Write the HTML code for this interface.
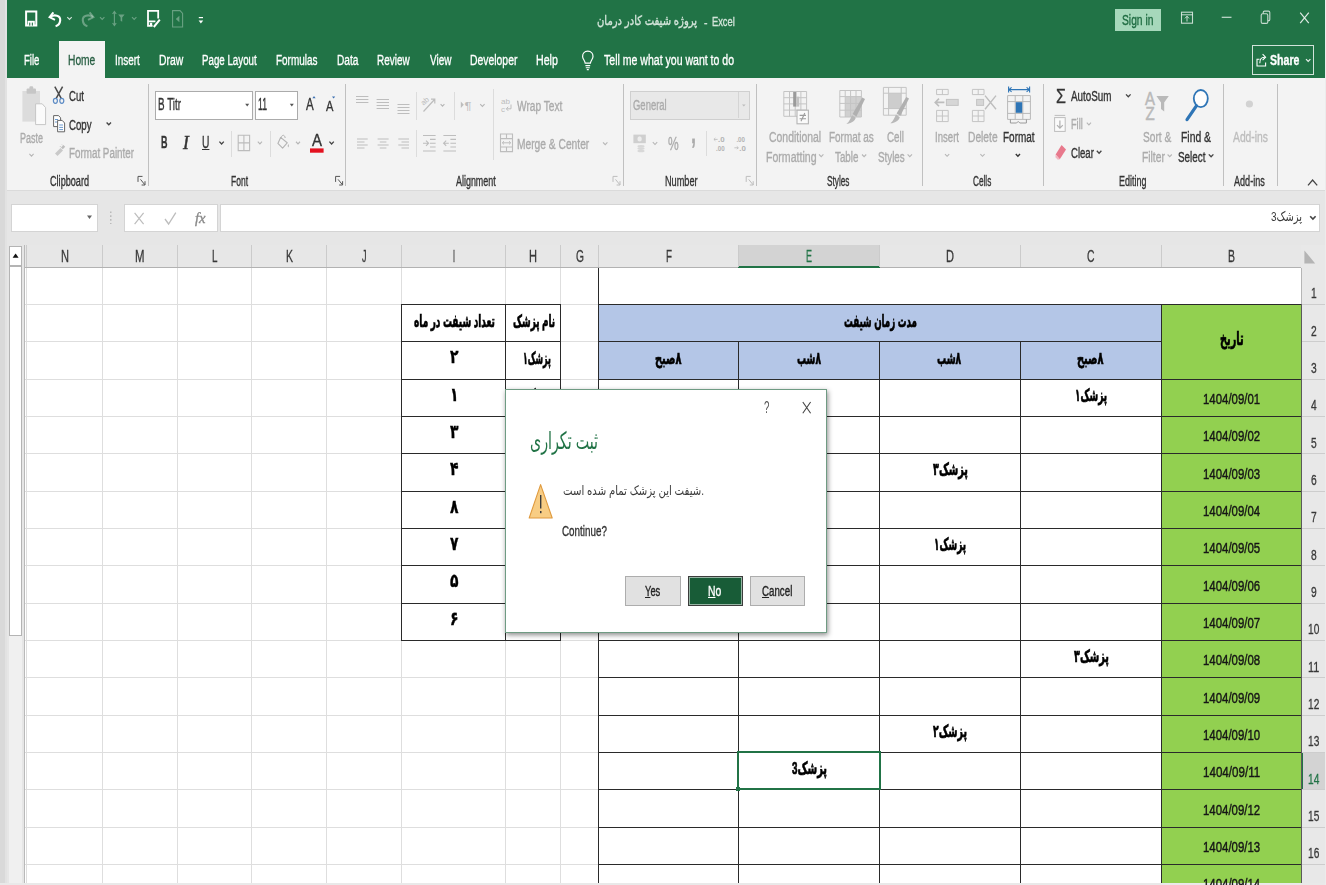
<!DOCTYPE html><html lang="fa"><head><meta charset="utf-8"><title>Excel</title><style>
html,body{margin:0;padding:0}
body{width:1326px;height:885px;position:relative;overflow:hidden;background:#e6e6e6;font-family:"Liberation Sans","DejaVu Sans",sans-serif}
.r{position:absolute}
.t{position:absolute;white-space:nowrap;line-height:1;transform-origin:0 0;display:block;-webkit-text-stroke:.35px currentColor}
.fa{font-family:"Liberation Sans","DejaVu Sans",sans-serif}
.sf{font-family:"Liberation Serif","DejaVu Serif",serif}
.b{font-weight:bold}
.hv{-webkit-text-stroke:.7px #000}
.i{font-style:italic}
.u{text-decoration:underline}
svg.ov{position:absolute;left:0;top:0}
.tl{position:absolute;left:0;top:0;width:1326px;height:885px;will-change:transform}
#dlg{position:absolute;left:505px;top:389px;width:322px;height:244px;background:#fff;border:1px solid #6f9b83;box-sizing:border-box;box-shadow:1px 2px 5px rgba(0,0,0,.45)}
.btn{position:absolute;box-sizing:border-box;border:1px solid #adadad;background:#e1e1e1}
</style></head><body>
<div class="r" style="left:0px;top:0px;width:1326px;height:885px;background:#e6e6e6;"></div>
<div class="r" style="left:7px;top:0px;width:1318px;height:78px;background:#217346;"></div>
<div class="r" style="left:0px;top:0px;width:7px;height:885px;background:#e2e2e2;"></div>
<div class="r" style="left:0px;top:0px;width:5px;height:885px;background:#d9d9d9;"></div>
<div class="r" style="left:59px;top:41px;width:46px;height:37px;background:#f3f3f3;"></div>
<div class="r" style="left:7px;top:78px;width:1318px;height:112px;background:#f3f3f3;"></div>
<div class="r" style="left:7px;top:190px;width:1318px;height:1px;background:#dadada;"></div>
<div class="r" style="left:1115px;top:9px;width:46px;height:22px;background:#a6d8bb;"></div>
<div class="r" style="left:1252px;top:45px;width:62px;height:30px;background:transparent;border:1px solid rgba(255,255,255,.8);box-sizing:border-box;"></div>
<div class="r" style="left:148px;top:84px;width:1px;height:102px;background:#c0c0c0;"></div>
<div class="r" style="left:345px;top:84px;width:1px;height:102px;background:#c0c0c0;"></div>
<div class="r" style="left:623px;top:84px;width:1px;height:102px;background:#c0c0c0;"></div>
<div class="r" style="left:756px;top:84px;width:1px;height:102px;background:#c0c0c0;"></div>
<div class="r" style="left:922px;top:84px;width:1px;height:102px;background:#c0c0c0;"></div>
<div class="r" style="left:1043px;top:84px;width:1px;height:102px;background:#c0c0c0;"></div>
<div class="r" style="left:1223px;top:84px;width:1px;height:102px;background:#c0c0c0;"></div>
<div class="r" style="left:1277px;top:84px;width:1px;height:102px;background:#c0c0c0;"></div>
<div class="r" style="left:231px;top:131px;width:1px;height:26px;background:#dcdcdc;"></div>
<div class="r" style="left:270px;top:131px;width:1px;height:26px;background:#dcdcdc;"></div>
<div class="r" style="left:416px;top:92px;width:1px;height:28px;background:#dcdcdc;"></div>
<div class="r" style="left:454px;top:92px;width:1px;height:28px;background:#dcdcdc;"></div>
<div class="r" style="left:416px;top:130px;width:1px;height:27px;background:#dcdcdc;"></div>
<div class="r" style="left:493px;top:89px;width:1px;height:71px;background:#dcdcdc;"></div>
<div class="r" style="left:706px;top:131px;width:1px;height:25px;background:#dcdcdc;"></div>
<div class="r" style="left:155px;top:91px;width:98px;height:29px;background:#fff;border:1px solid #ababab;box-sizing:border-box;"></div>
<div class="r" style="left:255px;top:91px;width:43px;height:29px;background:#fff;border:1px solid #ababab;box-sizing:border-box;"></div>
<div class="r" style="left:630px;top:91px;width:120px;height:29px;background:#e8e8e8;border:1px solid #cfcfcf;box-sizing:border-box;"></div>
<div class="r" style="left:738px;top:92px;width:1px;height:26px;background:#d4d4d4;"></div>
<div class="r" style="left:11px;top:204px;width:87px;height:28px;background:#fff;border:1px solid #d4d4d4;box-sizing:border-box;"></div>
<div class="r" style="left:124px;top:204px;width:94px;height:28px;background:#fff;border:1px solid #d4d4d4;box-sizing:border-box;"></div>
<div class="r" style="left:220px;top:204px;width:1100px;height:28px;background:#fff;border:1px solid #d4d4d4;box-sizing:border-box;"></div>
<div class="r" style="left:25px;top:268px;width:1276px;height:617px;background:#fff;"></div>
<div class="r" style="left:25px;top:245px;width:1301px;height:23px;background:#e7e7e7;"></div>
<div class="r" style="left:25px;top:267px;width:1276px;height:1px;background:#b2b2b2;"></div>
<div class="r" style="left:1301px;top:245px;width:25px;height:640px;background:#e8e8e8;"></div>
<div class="r" style="left:1301px;top:268px;width:1px;height:617px;background:#b5b5b5;"></div>
<div class="r" style="left:24px;top:245px;width:1px;height:640px;background:#b9b9b9;"></div>
<div class="r" style="left:738px;top:245px;width:142px;height:23px;background:#d3d3d3;"></div>
<div class="r" style="left:738px;top:266px;width:142px;height:2px;background:#217346;"></div>
<div class="r" style="left:1302px;top:752px;width:24px;height:37px;background:#d3d3d3;"></div>
<div class="r" style="left:1301px;top:752px;width:2px;height:37px;background:#217346;"></div>
<div class="r" style="left:26px;top:245px;width:1px;height:22px;background:#cbcbcb;"></div>
<div class="r" style="left:102px;top:245px;width:1px;height:22px;background:#cbcbcb;"></div>
<div class="r" style="left:177px;top:245px;width:1px;height:22px;background:#cbcbcb;"></div>
<div class="r" style="left:251px;top:245px;width:1px;height:22px;background:#cbcbcb;"></div>
<div class="r" style="left:326px;top:245px;width:1px;height:22px;background:#cbcbcb;"></div>
<div class="r" style="left:401px;top:245px;width:1px;height:22px;background:#cbcbcb;"></div>
<div class="r" style="left:505px;top:245px;width:1px;height:22px;background:#cbcbcb;"></div>
<div class="r" style="left:560px;top:245px;width:1px;height:22px;background:#cbcbcb;"></div>
<div class="r" style="left:598px;top:245px;width:1px;height:22px;background:#cbcbcb;"></div>
<div class="r" style="left:738px;top:245px;width:1px;height:22px;background:#cbcbcb;"></div>
<div class="r" style="left:879px;top:245px;width:1px;height:22px;background:#cbcbcb;"></div>
<div class="r" style="left:1020px;top:245px;width:1px;height:22px;background:#cbcbcb;"></div>
<div class="r" style="left:1161px;top:245px;width:1px;height:22px;background:#cbcbcb;"></div>
<div class="r" style="left:25px;top:304px;width:1276px;height:1px;background:#dedede;"></div>
<div class="r" style="left:1302px;top:304px;width:24px;height:1px;background:#cdcdcd;"></div>
<div class="r" style="left:25px;top:341px;width:1276px;height:1px;background:#dedede;"></div>
<div class="r" style="left:1302px;top:341px;width:24px;height:1px;background:#cdcdcd;"></div>
<div class="r" style="left:25px;top:379px;width:1276px;height:1px;background:#dedede;"></div>
<div class="r" style="left:1302px;top:379px;width:24px;height:1px;background:#cdcdcd;"></div>
<div class="r" style="left:25px;top:416px;width:1276px;height:1px;background:#dedede;"></div>
<div class="r" style="left:1302px;top:416px;width:24px;height:1px;background:#cdcdcd;"></div>
<div class="r" style="left:25px;top:453px;width:1276px;height:1px;background:#dedede;"></div>
<div class="r" style="left:1302px;top:453px;width:24px;height:1px;background:#cdcdcd;"></div>
<div class="r" style="left:25px;top:491px;width:1276px;height:1px;background:#dedede;"></div>
<div class="r" style="left:1302px;top:491px;width:24px;height:1px;background:#cdcdcd;"></div>
<div class="r" style="left:25px;top:528px;width:1276px;height:1px;background:#dedede;"></div>
<div class="r" style="left:1302px;top:528px;width:24px;height:1px;background:#cdcdcd;"></div>
<div class="r" style="left:25px;top:565px;width:1276px;height:1px;background:#dedede;"></div>
<div class="r" style="left:1302px;top:565px;width:24px;height:1px;background:#cdcdcd;"></div>
<div class="r" style="left:25px;top:603px;width:1276px;height:1px;background:#dedede;"></div>
<div class="r" style="left:1302px;top:603px;width:24px;height:1px;background:#cdcdcd;"></div>
<div class="r" style="left:25px;top:640px;width:1276px;height:1px;background:#dedede;"></div>
<div class="r" style="left:1302px;top:640px;width:24px;height:1px;background:#cdcdcd;"></div>
<div class="r" style="left:25px;top:677px;width:1276px;height:1px;background:#dedede;"></div>
<div class="r" style="left:1302px;top:677px;width:24px;height:1px;background:#cdcdcd;"></div>
<div class="r" style="left:25px;top:715px;width:1276px;height:1px;background:#dedede;"></div>
<div class="r" style="left:1302px;top:715px;width:24px;height:1px;background:#cdcdcd;"></div>
<div class="r" style="left:25px;top:752px;width:1276px;height:1px;background:#dedede;"></div>
<div class="r" style="left:1302px;top:752px;width:24px;height:1px;background:#cdcdcd;"></div>
<div class="r" style="left:25px;top:789px;width:1276px;height:1px;background:#dedede;"></div>
<div class="r" style="left:1302px;top:789px;width:24px;height:1px;background:#cdcdcd;"></div>
<div class="r" style="left:25px;top:827px;width:1276px;height:1px;background:#dedede;"></div>
<div class="r" style="left:1302px;top:827px;width:24px;height:1px;background:#cdcdcd;"></div>
<div class="r" style="left:25px;top:864px;width:1276px;height:1px;background:#dedede;"></div>
<div class="r" style="left:1302px;top:864px;width:24px;height:1px;background:#cdcdcd;"></div>
<div class="r" style="left:26px;top:268px;width:1px;height:617px;background:#dedede;"></div>
<div class="r" style="left:102px;top:268px;width:1px;height:617px;background:#dedede;"></div>
<div class="r" style="left:177px;top:268px;width:1px;height:617px;background:#dedede;"></div>
<div class="r" style="left:251px;top:268px;width:1px;height:617px;background:#dedede;"></div>
<div class="r" style="left:326px;top:268px;width:1px;height:617px;background:#dedede;"></div>
<div class="r" style="left:401px;top:268px;width:1px;height:617px;background:#dedede;"></div>
<div class="r" style="left:505px;top:268px;width:1px;height:617px;background:#dedede;"></div>
<div class="r" style="left:560px;top:268px;width:1px;height:617px;background:#dedede;"></div>
<div class="r" style="left:598px;top:304px;width:1px;height:581px;background:#dedede;"></div>
<div class="r" style="left:738px;top:304px;width:1px;height:581px;background:#dedede;"></div>
<div class="r" style="left:879px;top:304px;width:1px;height:581px;background:#dedede;"></div>
<div class="r" style="left:1020px;top:304px;width:1px;height:581px;background:#dedede;"></div>
<div class="r" style="left:1161px;top:304px;width:1px;height:581px;background:#dedede;"></div>
<div class="r" style="left:9px;top:246px;width:13px;height:20px;background:#fff;border:1px solid #b4b4b4;box-sizing:border-box;"></div>
<div class="r" style="left:9px;top:266px;width:13px;height:370px;background:#fff;border:1px solid #b4b4b4;box-sizing:border-box;"></div>
<div class="r" style="left:9px;top:636px;width:13px;height:249px;background:#f0f0f0;"></div>
<div class="r" style="left:598px;top:304px;width:563px;height:75px;background:#b4c6e7;"></div>
<div class="r" style="left:1161px;top:304px;width:140px;height:581px;background:#92d050;"></div>
<div class="r" style="left:598px;top:304px;width:703px;height:1px;background:#2a2a2a;"></div>
<div class="r" style="left:598px;top:341px;width:563px;height:1px;background:#2a2a2a;"></div>
<div class="r" style="left:598px;top:379px;width:703px;height:1px;background:#2a2a2a;"></div>
<div class="r" style="left:598px;top:416px;width:703px;height:1px;background:#2a2a2a;"></div>
<div class="r" style="left:598px;top:453px;width:703px;height:1px;background:#2a2a2a;"></div>
<div class="r" style="left:598px;top:491px;width:703px;height:1px;background:#2a2a2a;"></div>
<div class="r" style="left:598px;top:528px;width:703px;height:1px;background:#2a2a2a;"></div>
<div class="r" style="left:598px;top:565px;width:703px;height:1px;background:#2a2a2a;"></div>
<div class="r" style="left:598px;top:603px;width:703px;height:1px;background:#2a2a2a;"></div>
<div class="r" style="left:598px;top:640px;width:703px;height:1px;background:#2a2a2a;"></div>
<div class="r" style="left:598px;top:677px;width:703px;height:1px;background:#2a2a2a;"></div>
<div class="r" style="left:598px;top:715px;width:703px;height:1px;background:#2a2a2a;"></div>
<div class="r" style="left:598px;top:752px;width:703px;height:1px;background:#2a2a2a;"></div>
<div class="r" style="left:598px;top:789px;width:703px;height:1px;background:#2a2a2a;"></div>
<div class="r" style="left:598px;top:827px;width:703px;height:1px;background:#2a2a2a;"></div>
<div class="r" style="left:598px;top:864px;width:703px;height:1px;background:#2a2a2a;"></div>
<div class="r" style="left:598px;top:268px;width:1px;height:617px;background:#2a2a2a;"></div>
<div class="r" style="left:1161px;top:304px;width:1px;height:581px;background:#2a2a2a;"></div>
<div class="r" style="left:1301px;top:304px;width:1px;height:581px;background:#5a5a5a;"></div>
<div class="r" style="left:738px;top:341px;width:1px;height:544px;background:#2a2a2a;"></div>
<div class="r" style="left:879px;top:341px;width:1px;height:544px;background:#2a2a2a;"></div>
<div class="r" style="left:1020px;top:341px;width:1px;height:544px;background:#2a2a2a;"></div>
<div class="r" style="left:401px;top:304px;width:160px;height:1px;background:#2a2a2a;"></div>
<div class="r" style="left:401px;top:341px;width:160px;height:1px;background:#2a2a2a;"></div>
<div class="r" style="left:401px;top:379px;width:160px;height:1px;background:#2a2a2a;"></div>
<div class="r" style="left:401px;top:416px;width:160px;height:1px;background:#2a2a2a;"></div>
<div class="r" style="left:401px;top:453px;width:160px;height:1px;background:#2a2a2a;"></div>
<div class="r" style="left:401px;top:491px;width:160px;height:1px;background:#2a2a2a;"></div>
<div class="r" style="left:401px;top:528px;width:160px;height:1px;background:#2a2a2a;"></div>
<div class="r" style="left:401px;top:565px;width:160px;height:1px;background:#2a2a2a;"></div>
<div class="r" style="left:401px;top:603px;width:160px;height:1px;background:#2a2a2a;"></div>
<div class="r" style="left:401px;top:640px;width:160px;height:1px;background:#2a2a2a;"></div>
<div class="r" style="left:401px;top:304px;width:1px;height:337px;background:#2a2a2a;"></div>
<div class="r" style="left:505px;top:304px;width:1px;height:337px;background:#2a2a2a;"></div>
<div class="r" style="left:560px;top:304px;width:1px;height:337px;background:#2a2a2a;"></div>
<div class="r" style="left:737px;top:751px;width:144px;height:39px;background:transparent;border:2px solid #217346;box-sizing:border-box;"></div>
<div class="r" style="left:736px;top:787px;width:4px;height:4px;background:#217346;"></div>
<div class="r" style="left:0px;top:883px;width:1326px;height:2px;background:#e9e9e9;"></div>
<div class="r" style="left:1325px;top:0px;width:1px;height:885px;background:#ececec;"></div>
<svg class="ov" width="1326" height="885" viewBox="0 0 1326 885"><path d="M26.1 11.5H36.3V25.6H26.1Z" fill="none" stroke="#fff" stroke-width="2"/><rect x="27.6" y="20.8" width="7.2" height="4.8" fill="#fff"/><rect x="29.2" y="22.6" width="1.1" height="3" fill="#217346"/><rect x="31.8" y="22.6" width="1.1" height="3" fill="#217346"/>
<path d="M53.4 12.4L49.6 17.2L55 19.8" fill="none" stroke="#fff" stroke-width="2" stroke-linejoin="miter"/><path d="M50 17C54.5 14 60.6 15.4 60.2 20.4C59.9 23.6 57.8 25.6 55.6 26.2" fill="none" stroke="#fff" stroke-width="2.1"/>
<path d="M67.3 17.04 L69.50 19.36 L71.7 17.04" fill="none" stroke="rgba(255,255,255,.8)" stroke-width="1.1"/>
<path d="M89.6 12.4L93.4 17.2L88 19.8" fill="none" stroke="rgba(255,255,255,.33)" stroke-width="2"/><path d="M93 17C88.5 14 82.4 15.4 82.8 20.4C83.1 23.6 85.2 25.6 87.4 26.2" fill="none" stroke="rgba(255,255,255,.33)" stroke-width="2.1"/>
<path d="M100 17.04 L102.20 19.36 L104.4 17.04" fill="none" stroke="rgba(255,255,255,.33)" stroke-width="1.1"/>
<path d="M114.4 11.5v14M112.6 14l1.8-2.6l1.8 2.6M112.6 23l1.8 2.6l1.8-2.6" fill="none" stroke="rgba(255,255,255,.33)" stroke-width="1.1"/><path d="M118.2 14.6h6.4l-2.4 3v4.2l-1.6-1v-3.2z" fill="rgba(255,255,255,.33)"/>
<path d="M132 17.04 L134.20 19.36 L136.4 17.04" fill="none" stroke="rgba(255,255,255,.33)" stroke-width="1.1"/>
<path d="M158.2 18.6V10.8H148V25.8H152.6M148 21.4H155.4" fill="none" stroke="#fff" stroke-width="1.8"/><path d="M153.8 27L159.8 19.6" stroke="#fff" stroke-width="2"/><rect x="149.8" y="22.8" width="2.4" height="2.4" fill="#fff"/>
<path d="M172.6 10.6H180l2.6 2.8V27H172.6Z" fill="none" stroke="rgba(255,255,255,.33)" stroke-width="1.1"/><path d="M179.4 15.8v6.4l-3.6-3.2z" fill="rgba(255,255,255,.33)"/>
<path d="M198.8 17.6h4.2" stroke="#fff" stroke-width="1.2"/><path d="M198.6 20.6h4.6l-2.3 2.9z" fill="#fff"/>
<rect x="1181.5" y="12.2" width="11" height="11" fill="none" stroke="rgba(255,255,255,.75)" stroke-width="1.1"/><path d="M1181.5 14.8h11" stroke="rgba(255,255,255,.75)" stroke-width="1"/><path d="M1187 21.5v-5M1185 18.4l2-2.2l2 2.2" fill="none" stroke="rgba(255,255,255,.75)" stroke-width="1"/>
<path d="M1221.7 17.3h9.8" stroke="rgba(255,255,255,.75)" stroke-width="1.2"/>
<rect x="1261.2" y="13.8" width="6.6" height="9.6" rx="1.5" fill="none" stroke="rgba(255,255,255,.75)" stroke-width="1.1"/><path d="M1263.2 13.6v-1.2q0-1.3 1.3-1.3h4q1.3 0 1.3 1.3v7q0 1.3-1.3 1.3h-.6" fill="none" stroke="rgba(255,255,255,.75)" stroke-width="1.1"/>
<path d="M1300.2 12.6L1308.8 23.2M1308.8 12.6L1300.2 23.2" stroke="rgba(255,255,255,.85)" stroke-width="1.2"/>
<path d="M587.8 51.2C591.4 51.2 593 54 593 56.4C593 59.2 590.6 60.6 590.4 63.2H585.2C585 60.6 582.6 59.2 582.6 56.4C582.6 54 584.2 51.2 587.8 51.2Z" fill="none" stroke="#fff" stroke-width="1.2"/><path d="M585.4 65.6h4.8M585.8 67.8h4M586.8 69.6h2" stroke="#fff" stroke-width="1.1"/>
<path d="M1259.5 59.2H1257V66H1265.6V62.5" fill="none" stroke="#fff" stroke-width="1.1"/><path d="M1259.8 63.2C1259.8 59.4 1261.5 57.2 1264.4 57.2M1262.6 54.2L1265.6 57.2L1262.6 60.2" fill="none" stroke="#fff" stroke-width="1.1"/>
<path d="M1306 59.14 L1308.20 61.46 L1310.4 59.14" fill="none" stroke="rgba(255,255,255,.9)" stroke-width="1.2"/>
<rect x="22.4" y="91" width="17.6" height="30.6" fill="#dcdcdc"/><rect x="26.6" y="88.6" width="9.4" height="5.2" rx="1" fill="#c6c6c6"/><rect x="29.4" y="86.2" width="3.8" height="3.4" rx="1.2" fill="#c6c6c6"/><path d="M35.6 103.8H42.2L45.6 107.6V124.6H35.6Z" fill="#fbfbfb" stroke="#c6c6c6" stroke-width="1"/>
<path d="M29.4 153.90 L31.50 156.10 L33.6 153.90" fill="none" stroke="#b6b6b6" stroke-width="1.1"/>
<path d="M54.8 86.6L61.2 98.4M62.6 86.6L56.2 98.4" stroke="#4a4a4a" stroke-width="1.5" fill="none"/><ellipse cx="55.4" cy="100.8" rx="2" ry="2.5" fill="none" stroke="#5b8ac4" stroke-width="1.2"/><ellipse cx="61.8" cy="100.8" rx="2" ry="2.5" fill="none" stroke="#5b8ac4" stroke-width="1.2"/>
<path d="M53.6 115.6H58.6L60.6 117.8V126.6H53.6Z" fill="#fff" stroke="#666" stroke-width="1"/><path d="M57.6 120.4H62.2L64.6 123V131.8H57.6Z" fill="#fff" stroke="#666" stroke-width="1"/><path d="M55 119.5h3M55 122h2M59.2 125h3.8M59.2 127.4h3.8M59.2 129.6h3.8" stroke="#5b8fc9" stroke-width=".9"/>
<path d="M106.6 122.44 L108.80 124.75 L111 122.44" fill="none" stroke="#444" stroke-width="1.3"/>
<path d="M55 153.5L60.5 148L63 150.5L57.5 156Z" fill="#c9c9c9"/><path d="M61 147.5L63.5 145L65.2 146.8L62.8 149.3Z" fill="#bdbdbd"/><path d="M60 146.2l1.2 1.2M62 144.6l.8.8" stroke="#c4c4c4" stroke-width="1"/>
<path d="M138 181.9 V176.4 H142.5" fill="none" stroke="#555" stroke-width="1"/><path d="M140.5 179.4 L144.8 184.70000000000002 M145 181.20000000000002 V185.0 H141.6" fill="none" stroke="#555" stroke-width="1"/>
<path d="M245.2 103.8h4l-2 2.6z" fill="#555"/><path d="M289.8 103.8h4l-2 2.6z" fill="#555"/>
<path d="M312.4 98.2h3.2l-1.6-2.2z" fill="#3b6fb0"/><path d="M332 96.4h3.2l-1.6 2.2z" fill="#3b6fb0"/>
<path d="M219.4 141.65 L221.60 143.96 L223.8 141.65" fill="none" stroke="#444" stroke-width="1.3"/>
<path d="M238.2 135.2H249.6V150.6H238.2ZM243.9 135.2V150.6M238.2 142.9H249.6" fill="none" stroke="#bcbcbc" stroke-width="1.1"/>
<path d="M257.8 141.70 L259.90 143.90 L262 141.70" fill="none" stroke="#b6b6b6" stroke-width="1.1"/>
<path d="M280.6 137.4L287.2 142.8L282.6 148.2L277.9 143.4Z" fill="none" stroke="#b4b4b4" stroke-width="1.1" stroke-linejoin="round"/><path d="M281.4 139C280.6 135 284.6 133.6 285.2 138" fill="none" stroke="#b4b4b4" stroke-width="1"/><path d="M288.3 143.8q1.3 2.6 0 3.6q-1.3-1 0-3.6z" fill="#b4b4b4"/>
<path d="M296 141.75 L298.00 143.85 L300 141.75" fill="none" stroke="#b6b6b6" stroke-width="1.1"/>
<rect x="310" y="148.4" width="13.6" height="4.3" fill="#e3111f"/>
<path d="M329.4 141.65 L331.60 143.96 L333.8 141.65" fill="none" stroke="#444" stroke-width="1.3"/>
<path d="M335.6 181.9 V176.4 H340.1" fill="none" stroke="#555" stroke-width="1"/><path d="M338.1 179.4 L342.40000000000003 184.70000000000002 M342.6 181.20000000000002 V185.0 H339.20000000000005" fill="none" stroke="#555" stroke-width="1"/>
<path d="M356.0 96.5H368.4 M356.0 99.5H368.4 M356.0 102.5H368.4" stroke="#bdbdbd" stroke-width="1.1" fill="none"/>
<path d="M376.6 99.5H389.0 M376.6 102.5H389.0 M376.6 105.5H389.0 M376.6 108.5H389.0" stroke="#bdbdbd" stroke-width="1.1" fill="none"/>
<path d="M397.5 104.5H409.5 M397.5 107.5H409.5 M397.5 110.5H409.5 M397.5 113.5H409.5" stroke="#bdbdbd" stroke-width="1.1" fill="none"/>
<path d="M357.0 139H367.7 M357.0 142H364.5 M357.0 145H367.7 M357.0 148H364.5" stroke="#bdbdbd" stroke-width="1.1" fill="none"/>
<path d="M377.6 139H388.6 M379.8 142H386.4 M377.6 145H388.6 M379.8 148H386.4" stroke="#bdbdbd" stroke-width="1.1" fill="none"/>
<path d="M398.3 139H409.0 M401.5 142H409.0 M398.3 145H409.0 M401.5 148H409.0" stroke="#bdbdbd" stroke-width="1.1" fill="none"/>
<path d="M423.5 111.5L434.5 99.5M434.8 103.6V99.2H431" fill="none" stroke="#bdbdbd" stroke-width="1.2"/><text x="422" y="104" font-size="7.5" font-family="Liberation Sans, sans-serif" fill="#bdbdbd" transform="rotate(-42 425 103)">ab</text>
<path d="M440.6 104.20 L442.50 106.20 L444.4 104.20" fill="none" stroke="#b6b6b6" stroke-width="1.1"/>
<path d="M460.8 101.6v6.4l3-3.2z" fill="#bdbdbd"/><text x="464.6" y="110" font-size="11" font-family="Liberation Sans, sans-serif" fill="#bdbdbd" textLength="7" lengthAdjust="spacingAndGlyphs">¶</text>
<path d="M480.2 104.04 L482.40 106.36 L484.6 104.04" fill="none" stroke="#b6b6b6" stroke-width="1.1"/>
<path d="M423.0 135.5H435.6 M423.0 151H435.6" stroke="#bdbdbd" stroke-width="1.1" fill="none"/>
<path d="M430.0 139.4H435.6 M430.0 143.2H435.6 M430.0 147H435.6" stroke="#bdbdbd" stroke-width="1.1" fill="none"/>
<path d="M423 143.2h5.2M426 140.6l2.6 2.6l-2.6 2.6" fill="none" stroke="#bdbdbd" stroke-width="1.1"/>
<path d="M443.4 135.5H456.0 M443.4 151H456.0" stroke="#bdbdbd" stroke-width="1.1" fill="none"/>
<path d="M450.4 139.4H456.0 M450.4 143.2H456.0 M450.4 147H456.0" stroke="#bdbdbd" stroke-width="1.1" fill="none"/>
<path d="M443.6 143.2h5.2M446.2 140.6l-2.6 2.6l2.6 2.6" fill="none" stroke="#bdbdbd" stroke-width="1.1"/>
<text x="501" y="104.2" font-size="8" font-family="Liberation Sans, sans-serif" fill="#bdbdbd" textLength="9" lengthAdjust="spacingAndGlyphs">ab</text><text x="501" y="111.8" font-size="8" font-family="Liberation Sans, sans-serif" fill="#bdbdbd">c</text><path d="M511 104.5v4.3h-4.4M508.2 106.8l-1.9 2l1.9 2" fill="none" stroke="#bdbdbd" stroke-width="1"/>
<path d="M500.5 134H512.5V151.6H500.5ZM500.5 138.6H512.5M500.5 147H512.5M506.5 134V138.6M506.5 147V151.6" fill="none" stroke="#bdbdbd" stroke-width="1.1"/><path d="M502.4 142.8h8.2M504 141.2l-1.7 1.6l1.7 1.6M509 141.2l1.7 1.6l-1.7 1.6" fill="none" stroke="#bdbdbd" stroke-width="1"/>
<path d="M603 142.44 L605.20 144.75 L607.4 142.44" fill="none" stroke="#b6b6b6" stroke-width="1.1"/>
<path d="M613 181.9 V176.4 H617.5" fill="none" stroke="#bdbdbd" stroke-width="1"/><path d="M615.5 179.4 L619.8 184.70000000000002 M620 181.20000000000002 V185.0 H616.6" fill="none" stroke="#bdbdbd" stroke-width="1"/>
<path d="M742 104.4h3.6l-1.8 2.2z" fill="#bcbcbc"/>
<rect x="633.4" y="134.6" width="12.4" height="8.6" fill="#cfcfcf"/><ellipse cx="639.6" cy="138.9" rx="2.2" ry="2.6" fill="#ededed"/><ellipse cx="641" cy="146.2" rx="3.6" ry="1.3" fill="#d8d8d8"/><ellipse cx="641" cy="148.6" rx="3.6" ry="1.3" fill="#d8d8d8"/><ellipse cx="641" cy="151" rx="3.6" ry="1.3" fill="#d8d8d8"/>
<path d="M652.8 142.24 L655.00 144.56 L657.2 142.24" fill="none" stroke="#b6b6b6" stroke-width="1.1"/>
<text x="718" y="142.2" font-size="7.5" font-weight="bold" font-family="Liberation Sans, sans-serif" fill="#b4b4b4" textLength="6.6" lengthAdjust="spacingAndGlyphs">.0</text><text x="716" y="150.6" font-size="7.5" font-weight="bold" font-family="Liberation Sans, sans-serif" fill="#b4b4b4" textLength="8.6" lengthAdjust="spacingAndGlyphs">.00</text><path d="M714 139.4h3.6M715.4 138l-1.5 1.4l1.5 1.4" fill="none" stroke="#bdbdbd" stroke-width=".9"/>
<text x="736.4" y="142.2" font-size="7.5" font-weight="bold" font-family="Liberation Sans, sans-serif" fill="#b4b4b4" textLength="8.6" lengthAdjust="spacingAndGlyphs">.00</text><text x="739.2" y="150.6" font-size="7.5" font-weight="bold" font-family="Liberation Sans, sans-serif" fill="#b4b4b4" textLength="6.6" lengthAdjust="spacingAndGlyphs">.0</text><path d="M734.4 147.8h3.8M736.8 146.4l1.5 1.4l-1.5 1.4" fill="none" stroke="#bdbdbd" stroke-width=".9"/>
<path d="M746.2 181.9 V176.4 H750.7" fill="none" stroke="#bdbdbd" stroke-width="1"/><path d="M748.7 179.4 L753.0 184.70000000000002 M753.2 181.20000000000002 V185.0 H749.8000000000001" fill="none" stroke="#bdbdbd" stroke-width="1"/>
<path d="M783.8 91.5H806.6V116.3H783.8ZM789.5 91.5V116.3M795.2 91.5V116.3M800.9 91.5V116.3M783.8 97.7H806.6M783.8 103.9H806.6M783.8 110.1H806.6" fill="none" stroke="#c4c4c4" stroke-width="1"/><rect x="793.2" y="92" width="3.2" height="14.6" fill="#9a9a9a"/><rect x="796.4" y="96.6" width="2.8" height="10" fill="#c2c2c2"/><rect x="797" y="110.2" width="11.4" height="13.6" fill="#fafafa" stroke="#b4b4b4" stroke-width="1.1"/><path d="M799.6 115.4h6.4M799.6 118.8h6.4M804.8 113l-3.8 8.2" stroke="#9c9c9c" stroke-width="1.1" fill="none"/>
<rect x="845.2" y="96.6" width="16.2" height="20.4" fill="#d0d0d0"/><path d="M839.8 90.5H861.4V117H839.8ZM845.2 90.5V117M850.6 90.5V117M856 90.5V117M839.8 96.6H861.4M839.8 103.4H861.4M839.8 110.2H861.4" fill="none" stroke="#c4c4c4" stroke-width="1"/><path d="M865 99L856.4 116.4L852.6 114L862.2 97.6Z" fill="#b0b0b0"/><path d="M852 115.2L855.8 117.8C854.8 121.4 850 124 846.4 123.8C849.4 122 850.4 118.4 852 115.2Z" fill="#b8b8b8"/>
<rect x="888.6" y="93.2" width="12.6" height="15.4" fill="#cdcdcd"/><path d="M883.4 87.4H906.2V115.2H883.4ZM888.6 87.4V115.2M901.2 87.4V115.2M883.4 93.2H906.2M883.4 108.6H906.2" fill="none" stroke="#c4c4c4" stroke-width="1"/><path d="M909 98.4L900.4 115.8L896.6 113.4L906.2 97Z" fill="#b0b0b0"/><path d="M896 114.6L899.8 117.2C898.8 120.8 894 123.4 890.4 123.2C893.4 121.4 894.4 117.8 896 114.6Z" fill="#b8b8b8"/>
<path d="M819 154.44 L821.20 156.75 L823.4 154.44" fill="none" stroke="#b6b6b6" stroke-width="1.1"/>
<path d="M862 154.50 L864.10 156.70 L866.2 154.50" fill="none" stroke="#b6b6b6" stroke-width="1.1"/>
<path d="M907.6 154.44 L909.80 156.75 L912 154.44" fill="none" stroke="#b6b6b6" stroke-width="1.1"/>
<path d="M936.6 89.4H948.2V94.6H936.6ZM942.4 89.4V94.6M936.6 110.4H948.2V121.6H936.6ZM942.4 110.4V121.6M936.6 116H948.2" fill="none" stroke="#c4c4c4" stroke-width="1"/><rect x="946.4" y="99.4" width="11.8" height="6" fill="#d6d6d6" stroke="#c4c4c4" stroke-width="1"/><path d="M935.4 102.4h9M939 98.6l-3.8 3.8l3.8 3.8" fill="none" stroke="#bdbdbd" stroke-width="1.6"/>
<path d="M972.4 89.4H984V94.6H972.4ZM978.2 89.4V94.6M972.4 110.4H984V121.6H972.4ZM978.2 110.4V121.6M972.4 116H984" fill="none" stroke="#c4c4c4" stroke-width="1"/><rect x="976.6" y="99.4" width="7" height="6" fill="#d6d6d6" stroke="#c4c4c4" stroke-width="1"/><path d="M985 95.6L996 109.2M996 95.6L985 109.2" stroke="#bdbdbd" stroke-width="1.4"/>
<path d="M1008.6 89.6H1029.6M1008.6 86.6V92.6M1029.6 86.6V92.6" stroke="#2e75b6" stroke-width="1.1" fill="none"/><path d="M1011.6 87.4l-2.6 2.2l2.6 2.2M1026.6 87.4l2.6 2.2l-2.6 2.2" stroke="#2e75b6" stroke-width="1.1" fill="none"/><path d="M1007.6 95.6H1030.4V119.4H1007.6ZM1015.2 95.6V119.4M1022.8 95.6V119.4M1007.6 101.6H1030.4M1007.6 113.4H1030.4" fill="none" stroke="#b9b9b9" stroke-width="1"/><rect x="1015.8" y="102.2" width="6.4" height="10.6" fill="#2e75b6"/><path d="M1010.4 119.4v3.6h6.2l1.6-1.6l1.6 1.6h6.6v-3.6" fill="none" stroke="#9a9a9a" stroke-width="1"/>
<path d="M945 154.10 L947.10 156.30 L949.2 154.10" fill="none" stroke="#b6b6b6" stroke-width="1.1"/>
<path d="M980.4 154.10 L982.50 156.30 L984.6 154.10" fill="none" stroke="#b6b6b6" stroke-width="1.1"/>
<path d="M1015.8 154.10 L1017.90 156.30 L1020 154.10" fill="none" stroke="#333" stroke-width="1.4"/>
<path d="M1126 94.39 L1128.30 96.81 L1130.6 94.39" fill="none" stroke="#444" stroke-width="1.3"/>
<rect x="1054.6" y="117.6" width="10.6" height="13.8" fill="#fafafa" stroke="#bdbdbd" stroke-width="1"/><path d="M1054.6 115.4h10.6" stroke="#bdbdbd" stroke-width="1"/><path d="M1059.9 120.4v7.6M1057 125.2l2.9 3l2.9-3" fill="none" stroke="#b0b0b0" stroke-width="1.2"/>
<path d="M1086.8 122.70 L1088.90 124.90 L1091 122.70" fill="none" stroke="#b6b6b6" stroke-width="1.1"/>
<path d="M1061.6 145L1066 149.6L1059.8 159.2L1055.6 154.6Z" fill="#e8798c"/><path d="M1055.6 154.6L1059.8 159.2L1057.8 159.8L1055.4 157.2Z" fill="#f2b6c0"/>
<path d="M1096.8 150.79 L1099.10 153.21 L1101.4 150.79" fill="none" stroke="#444" stroke-width="1.3"/>
<text x="1145" y="104.6" font-size="18" font-family="Liberation Sans, sans-serif" fill="#b9b9b9" stroke="#b9b9b9" stroke-width=".5" textLength="10" lengthAdjust="spacingAndGlyphs">A</text><text x="1145.4" y="120" font-size="18" font-family="Liberation Sans, sans-serif" fill="#b9b9b9" stroke="#b9b9b9" stroke-width=".5" textLength="9.2" lengthAdjust="spacingAndGlyphs">Z</text><path d="M1156.4 96h12.4l-4.6 6.4v9l-3.2-2.4v-6.6z" fill="#b9b9b9"/>
<path d="M1167.6 154.50 L1169.70 156.70 L1171.8 154.50" fill="none" stroke="#b6b6b6" stroke-width="1.1"/>
<ellipse cx="1200.8" cy="98.6" rx="7" ry="8.6" fill="#fdfdfd" stroke="#2e75b6" stroke-width="1.8"/><path d="M1196.4 105.8L1187 119.6" stroke="#2e75b6" stroke-width="3.2" stroke-linecap="round"/>
<path d="M1208.8 154.39 L1211.10 156.81 L1213.4 154.39" fill="none" stroke="#444" stroke-width="1.3"/>
<circle cx="1249.4" cy="104" r="3.6" fill="#d2d2d2"/>
<path d="M1308 185.4L1312.6 180L1317.2 185.4" fill="none" stroke="#444" stroke-width="1.3"/>
<path d="M87 215.6h5l-2.5 3.4z" fill="#666"/>
<path d="M110.8 211.5v1.6M110.8 215.3v1.6M110.8 219.1v1.6M110.8 222.9v1" stroke="#b0b0b0" stroke-width="1.2"/>
<path d="M134.6 212.8L143.6 224.2M143.6 212.8L134.6 224.2" stroke="#bdbdbd" stroke-width="1.2"/>
<path d="M165 219L168.6 224L175.8 212.6" fill="none" stroke="#bdbdbd" stroke-width="1.3"/>
<path d="M1310.2 216.18 L1312.90 219.02 L1315.6 216.18" fill="none" stroke="#444" stroke-width="1.6"/>
<path d="M1304.4 250.4V263.4H1315.2Z" fill="#b4b4b4"/>
<path d="M12.6 257.8h6l-3-4.4z" fill="#111"/></svg>
<div class="tl">
<span class="t fa" dir="rtl" style="left:597.0px;top:14.0px;font-size:13px;color:#d3e5da;transform:scaleX(0.770);">پروژه شیفت کادر درمان</span>
<span class="t" style="left:703.5px;top:15.5px;font-size:13px;color:#d3e5da;transform:scaleX(0.806);">-</span>
<span class="t" style="left:712.0px;top:14.9px;font-size:13.5px;color:#d3e5da;transform:scaleX(0.688);">Excel</span>
<span class="t" style="left:1122.0px;top:12.8px;font-size:14.5px;color:#1e6b41;transform:scaleX(0.708);">Sign in</span>
<span class="t" style="left:24.4px;top:52.0px;font-size:15.5px;color:#fff;transform:scaleX(0.616);">File</span>
<span class="t" style="left:67.7px;top:52.0px;font-size:15.5px;color:#2a6045;transform:scaleX(0.660);">Home</span>
<span class="t" style="left:114.5px;top:52.0px;font-size:15.5px;color:#fff;transform:scaleX(0.642);">Insert</span>
<span class="t" style="left:158.8px;top:52.0px;font-size:15.5px;color:#fff;transform:scaleX(0.669);">Draw</span>
<span class="t" style="left:201.6px;top:52.0px;font-size:15.5px;color:#fff;transform:scaleX(0.628);">Page Layout</span>
<span class="t" style="left:275.8px;top:52.0px;font-size:15.5px;color:#fff;transform:scaleX(0.642);">Formulas</span>
<span class="t" style="left:336.6px;top:52.0px;font-size:15.5px;color:#fff;transform:scaleX(0.653);">Data</span>
<span class="t" style="left:377.0px;top:52.0px;font-size:15.5px;color:#fff;transform:scaleX(0.641);">Review</span>
<span class="t" style="left:429.5px;top:52.0px;font-size:15.5px;color:#fff;transform:scaleX(0.645);">View</span>
<span class="t" style="left:470.0px;top:52.0px;font-size:15.5px;color:#fff;transform:scaleX(0.671);">Developer</span>
<span class="t" style="left:536.3px;top:52.0px;font-size:15.5px;color:#fff;transform:scaleX(0.687);">Help</span>
<span class="t" style="left:603.7px;top:52.0px;font-size:15.5px;color:#fff;transform:scaleX(0.680);">Tell me what you want to do</span>
<span class="t b" style="left:1270.4px;top:52.4px;font-size:15px;color:#fff;transform:scaleX(0.705);">Share</span>
<span class="t" style="left:20.0px;top:130.7px;font-size:14px;color:#ababab;transform:scaleX(0.642);">Paste</span>
<span class="t" style="left:68.8px;top:89.0px;font-size:14px;color:#333;transform:scaleX(0.684);">Cut</span>
<span class="t" style="left:69.0px;top:117.7px;font-size:14px;color:#333;transform:scaleX(0.691);">Copy</span>
<span class="t" style="left:69.0px;top:145.6px;font-size:14px;color:#ababab;transform:scaleX(0.702);">Format Painter</span>
<span class="t" style="left:50.0px;top:173.7px;font-size:14px;color:#333;transform:scaleX(0.651);">Clipboard</span>
<span class="t" style="left:158.0px;top:97.3px;font-size:16px;color:#333;transform:scaleX(0.616);">B Titr</span>
<span class="t" style="left:258.0px;top:97.3px;font-size:16px;color:#333;transform:scaleX(0.542);">11</span>
<span class="t b" style="left:160.5px;top:134.3px;font-size:17px;color:#333;transform:scaleX(0.529);">B</span>
<span class="t sf i" style="left:182.8px;top:133.8px;font-size:18px;color:#333;-webkit-text-stroke:0.5px currentColor;transform:scaleX(0.967);">I</span>
<span class="t u" style="left:201.6px;top:134.3px;font-size:17px;color:#333;transform:scaleX(0.603);">U</span>
<span class="t" style="left:231.0px;top:173.7px;font-size:14px;color:#333;transform:scaleX(0.607);">Font</span>
<span class="t" style="left:305.5px;top:96.3px;font-size:17px;color:#333;transform:scaleX(0.679);">A</span>
<span class="t" style="left:325.6px;top:98.3px;font-size:15px;color:#333;transform:scaleX(0.739);">A</span>
<span class="t" style="left:311.5px;top:132.0px;font-size:17px;color:#333;transform:scaleX(0.882);">A</span>
<span class="t" style="left:516.5px;top:99.0px;font-size:14px;color:#ababab;transform:scaleX(0.725);">Wrap Text</span>
<span class="t" style="left:516.5px;top:137.2px;font-size:14px;color:#ababab;transform:scaleX(0.731);">Merge & Center</span>
<span class="t" style="left:456.3px;top:173.7px;font-size:14px;color:#333;transform:scaleX(0.638);">Alignment</span>
<span class="t" style="left:633.0px;top:98.4px;font-size:14px;color:#ababab;transform:scaleX(0.677);">General</span>
<span class="t" style="left:667.7px;top:134.0px;font-size:19px;color:#ababab;transform:scaleX(0.633);">%</span>
<span class="t b" style="left:691.3px;top:119.5px;font-size:28px;color:#ababab;transform:scaleX(0.643);">,</span>
<span class="t" style="left:665.0px;top:173.7px;font-size:14px;color:#333;transform:scaleX(0.655);">Number</span>
<span class="t" style="left:768.8px;top:130.2px;font-size:14px;color:#ababab;transform:scaleX(0.745);">Conditional</span>
<span class="t" style="left:765.5px;top:149.6px;font-size:14px;color:#ababab;transform:scaleX(0.755);">Formatting</span>
<span class="t" style="left:829.0px;top:130.2px;font-size:14px;color:#ababab;transform:scaleX(0.711);">Format as</span>
<span class="t" style="left:835.0px;top:149.6px;font-size:14px;color:#ababab;transform:scaleX(0.699);">Table</span>
<span class="t" style="left:886.8px;top:130.2px;font-size:14px;color:#ababab;transform:scaleX(0.701);">Cell</span>
<span class="t" style="left:877.5px;top:149.6px;font-size:14px;color:#ababab;transform:scaleX(0.700);">Styles</span>
<span class="t" style="left:827.0px;top:173.7px;font-size:14px;color:#333;transform:scaleX(0.588);">Styles</span>
<span class="t" style="left:935.0px;top:130.2px;font-size:14px;color:#ababab;transform:scaleX(0.685);">Insert</span>
<span class="t" style="left:968.0px;top:130.2px;font-size:14px;color:#ababab;transform:scaleX(0.731);">Delete</span>
<span class="t" style="left:1002.8px;top:130.2px;font-size:14px;color:#333;transform:scaleX(0.713);">Format</span>
<span class="t" style="left:972.7px;top:173.7px;font-size:14px;color:#333;transform:scaleX(0.588);">Cells</span>
<span class="t" style="left:1070.5px;top:89.0px;font-size:14px;color:#333;transform:scaleX(0.703);">AutoSum</span>
<span class="t" style="left:1070.5px;top:117.3px;font-size:14px;color:#ababab;transform:scaleX(0.654);">Fill</span>
<span class="t" style="left:1070.5px;top:145.6px;font-size:14px;color:#333;transform:scaleX(0.684);">Clear</span>
<span class="t" style="left:1142.7px;top:130.2px;font-size:14px;color:#ababab;transform:scaleX(0.727);">Sort &</span>
<span class="t" style="left:1141.5px;top:149.6px;font-size:14px;color:#ababab;transform:scaleX(0.736);">Filter</span>
<span class="t" style="left:1181.0px;top:130.2px;font-size:14px;color:#333;transform:scaleX(0.741);">Find &</span>
<span class="t" style="left:1177.5px;top:149.6px;font-size:14px;color:#333;transform:scaleX(0.707);">Select</span>
<span class="t" style="left:1118.6px;top:173.7px;font-size:14px;color:#333;transform:scaleX(0.640);">Editing</span>
<span class="t" style="left:1233.0px;top:130.0px;font-size:14px;color:#bdbdbd;transform:scaleX(0.737);">Add-ins</span>
<span class="t" style="left:1234.0px;top:173.7px;font-size:14px;color:#333;transform:scaleX(0.649);">Add-ins</span>
<span class="t" style="left:1055.6px;top:86.0px;font-size:20px;color:#333;transform:scaleX(0.800);">Σ</span>
<span class="t fa" dir="rtl" style="left:1270.5px;top:210.2px;font-size:13.5px;color:#3a3a3a;-webkit-text-stroke:0;transform:scaleX(0.738);">پزشک3</span>
<span class="t sf i" style="left:195.4px;top:210.5px;font-size:15px;color:#8a8a8a;transform:scaleX(0.979);">fx</span>
<span class="t" style="left:60.5px;top:247.9px;font-size:16.5px;color:#383838;-webkit-text-stroke:0.3px currentColor;transform:scaleX(0.671);">N</span>
<span class="t" style="left:135.2px;top:247.9px;font-size:16.5px;color:#383838;-webkit-text-stroke:0.3px currentColor;transform:scaleX(0.691);">M</span>
<span class="t" style="left:211.8px;top:247.9px;font-size:16.5px;color:#383838;-webkit-text-stroke:0.3px currentColor;transform:scaleX(0.599);">L</span>
<span class="t" style="left:285.5px;top:247.9px;font-size:16.5px;color:#383838;-webkit-text-stroke:0.3px currentColor;transform:scaleX(0.635);">K</span>
<span class="t" style="left:361.8px;top:247.9px;font-size:16.5px;color:#383838;-webkit-text-stroke:0.3px currentColor;transform:scaleX(0.545);">J</span>
<span class="t" style="left:452.5px;top:247.9px;font-size:16.5px;color:#383838;-webkit-text-stroke:0.3px currentColor;transform:scaleX(0.435);">I</span>
<span class="t" style="left:529.0px;top:247.9px;font-size:16.5px;color:#383838;-webkit-text-stroke:0.3px currentColor;transform:scaleX(0.671);">H</span>
<span class="t" style="left:575.5px;top:247.9px;font-size:16.5px;color:#383838;-webkit-text-stroke:0.3px currentColor;transform:scaleX(0.623);">G</span>
<span class="t" style="left:665.5px;top:247.9px;font-size:16.5px;color:#383838;-webkit-text-stroke:0.3px currentColor;transform:scaleX(0.594);">F</span>
<span class="t" style="left:806.0px;top:247.9px;font-size:16.5px;color:#217346;-webkit-text-stroke:0.3px currentColor;transform:scaleX(0.545);">E</span>
<span class="t" style="left:946.0px;top:247.9px;font-size:16.5px;color:#383838;-webkit-text-stroke:0.3px currentColor;transform:scaleX(0.671);">D</span>
<span class="t" style="left:1087.2px;top:247.9px;font-size:16.5px;color:#383838;-webkit-text-stroke:0.3px currentColor;transform:scaleX(0.629);">C</span>
<span class="t" style="left:1228.0px;top:247.9px;font-size:16.5px;color:#383838;-webkit-text-stroke:0.3px currentColor;transform:scaleX(0.635);">B</span>
<span class="t" style="left:1311.0px;top:285.2px;font-size:15.5px;color:#383838;-webkit-text-stroke:0.3px currentColor;transform:scaleX(0.661);">1</span>
<span class="t" style="left:1311.0px;top:322.6px;font-size:15.5px;color:#383838;-webkit-text-stroke:0.3px currentColor;transform:scaleX(0.661);">2</span>
<span class="t" style="left:1311.0px;top:359.9px;font-size:15.5px;color:#383838;-webkit-text-stroke:0.3px currentColor;transform:scaleX(0.661);">3</span>
<span class="t" style="left:1311.0px;top:397.2px;font-size:15.5px;color:#383838;-webkit-text-stroke:0.3px currentColor;transform:scaleX(0.661);">4</span>
<span class="t" style="left:1311.0px;top:434.5px;font-size:15.5px;color:#383838;-webkit-text-stroke:0.3px currentColor;transform:scaleX(0.661);">5</span>
<span class="t" style="left:1311.0px;top:471.9px;font-size:15.5px;color:#383838;-webkit-text-stroke:0.3px currentColor;transform:scaleX(0.661);">6</span>
<span class="t" style="left:1311.0px;top:509.2px;font-size:15.5px;color:#383838;-webkit-text-stroke:0.3px currentColor;transform:scaleX(0.661);">7</span>
<span class="t" style="left:1311.0px;top:546.5px;font-size:15.5px;color:#383838;-webkit-text-stroke:0.3px currentColor;transform:scaleX(0.661);">8</span>
<span class="t" style="left:1311.0px;top:583.9px;font-size:15.5px;color:#383838;-webkit-text-stroke:0.3px currentColor;transform:scaleX(0.661);">9</span>
<span class="t" style="left:1308.1px;top:621.2px;font-size:15.5px;color:#383838;-webkit-text-stroke:0.3px currentColor;transform:scaleX(0.655);">10</span>
<span class="t" style="left:1308.1px;top:658.5px;font-size:15.5px;color:#383838;-webkit-text-stroke:0.3px currentColor;transform:scaleX(0.702);">11</span>
<span class="t" style="left:1308.1px;top:695.8px;font-size:15.5px;color:#383838;-webkit-text-stroke:0.3px currentColor;transform:scaleX(0.655);">12</span>
<span class="t" style="left:1308.1px;top:733.2px;font-size:15.5px;color:#383838;-webkit-text-stroke:0.3px currentColor;transform:scaleX(0.655);">13</span>
<span class="t" style="left:1308.1px;top:770.5px;font-size:15.5px;color:#217346;-webkit-text-stroke:0.3px currentColor;transform:scaleX(0.655);">14</span>
<span class="t" style="left:1308.1px;top:807.8px;font-size:15.5px;color:#383838;-webkit-text-stroke:0.3px currentColor;transform:scaleX(0.655);">15</span>
<span class="t" style="left:1308.1px;top:845.2px;font-size:15.5px;color:#383838;-webkit-text-stroke:0.3px currentColor;transform:scaleX(0.655);">16</span>
<span class="t" style="left:1202.6px;top:390.9px;font-size:15.5px;color:#161616;-webkit-text-stroke:0.45px currentColor;transform:scaleX(0.737);">1404/09/01</span>
<span class="t" style="left:1202.6px;top:428.2px;font-size:15.5px;color:#161616;-webkit-text-stroke:0.45px currentColor;transform:scaleX(0.737);">1404/09/02</span>
<span class="t" style="left:1202.6px;top:465.6px;font-size:15.5px;color:#161616;-webkit-text-stroke:0.45px currentColor;transform:scaleX(0.737);">1404/09/03</span>
<span class="t" style="left:1202.6px;top:502.9px;font-size:15.5px;color:#161616;-webkit-text-stroke:0.45px currentColor;transform:scaleX(0.737);">1404/09/04</span>
<span class="t" style="left:1202.6px;top:540.2px;font-size:15.5px;color:#161616;-webkit-text-stroke:0.45px currentColor;transform:scaleX(0.737);">1404/09/05</span>
<span class="t" style="left:1202.6px;top:577.6px;font-size:15.5px;color:#161616;-webkit-text-stroke:0.45px currentColor;transform:scaleX(0.737);">1404/09/06</span>
<span class="t" style="left:1202.6px;top:614.9px;font-size:15.5px;color:#161616;-webkit-text-stroke:0.45px currentColor;transform:scaleX(0.737);">1404/09/07</span>
<span class="t" style="left:1202.6px;top:652.2px;font-size:15.5px;color:#161616;-webkit-text-stroke:0.45px currentColor;transform:scaleX(0.737);">1404/09/08</span>
<span class="t" style="left:1202.6px;top:689.5px;font-size:15.5px;color:#161616;-webkit-text-stroke:0.45px currentColor;transform:scaleX(0.737);">1404/09/09</span>
<span class="t" style="left:1202.6px;top:726.9px;font-size:15.5px;color:#161616;-webkit-text-stroke:0.45px currentColor;transform:scaleX(0.737);">1404/09/10</span>
<span class="t" style="left:1202.6px;top:764.2px;font-size:15.5px;color:#161616;-webkit-text-stroke:0.45px currentColor;transform:scaleX(0.748);">1404/09/11</span>
<span class="t" style="left:1202.6px;top:801.5px;font-size:15.5px;color:#161616;-webkit-text-stroke:0.45px currentColor;transform:scaleX(0.737);">1404/09/12</span>
<span class="t" style="left:1202.6px;top:838.9px;font-size:15.5px;color:#161616;-webkit-text-stroke:0.45px currentColor;transform:scaleX(0.737);">1404/09/13</span>
<span class="t" style="left:1202.6px;top:876.2px;font-size:15.5px;color:#161616;-webkit-text-stroke:0.45px currentColor;transform:scaleX(0.737);">1404/09/14</span>
<span class="t fa b hv" dir="rtl" style="left:1220.0px;top:329.8px;font-size:18px;color:#000;transform:scaleX(0.541);">تاریخ</span>
<span class="t fa b hv" dir="rtl" style="left:843.8px;top:312.5px;font-size:17px;color:#000;transform:scaleX(0.514);">مدت زمان شیفت</span>
<span class="t fa b hv" dir="rtl" style="left:1077.0px;top:349.8px;font-size:17px;color:#000;transform:scaleX(0.576);">۸صبح</span>
<span class="t fa b hv" dir="rtl" style="left:937.4px;top:349.8px;font-size:17px;color:#000;transform:scaleX(0.536);">۸شب</span>
<span class="t fa b hv" dir="rtl" style="left:797.4px;top:349.8px;font-size:17px;color:#000;transform:scaleX(0.530);">۸شب</span>
<span class="t fa b hv" dir="rtl" style="left:654.7px;top:349.8px;font-size:17px;color:#000;transform:scaleX(0.576);">۸صبح</span>
<span class="t fa b hv" dir="rtl" style="left:512.7px;top:312.5px;font-size:17px;color:#000;transform:scaleX(0.519);">نام پزشک</span>
<span class="t fa b hv" dir="rtl" style="left:413.6px;top:312.5px;font-size:17px;color:#000;transform:scaleX(0.526);">تعداد شیفت در ماه</span>
<span class="t fa b hv" dir="rtl" style="left:522.7px;top:349.8px;font-size:17px;color:#000;transform:scaleX(0.452);">پزشک۱</span>
<span class="t fa b" dir="rtl" style="left:449.5px;top:347.3px;font-size:19px;color:#000;-webkit-text-stroke:0.4px currentColor;transform:scaleX(0.732);">۲</span>
<span class="t fa b" dir="rtl" style="left:449.5px;top:384.7px;font-size:19px;color:#000;-webkit-text-stroke:0.4px currentColor;transform:scaleX(0.732);">۱</span>
<span class="t fa b" dir="rtl" style="left:449.5px;top:422.0px;font-size:19px;color:#000;-webkit-text-stroke:0.4px currentColor;transform:scaleX(0.732);">۳</span>
<span class="t fa b" dir="rtl" style="left:449.5px;top:459.3px;font-size:19px;color:#000;-webkit-text-stroke:0.4px currentColor;transform:scaleX(0.732);">۴</span>
<span class="t fa b" dir="rtl" style="left:449.5px;top:496.6px;font-size:19px;color:#000;-webkit-text-stroke:0.4px currentColor;transform:scaleX(0.732);">۸</span>
<span class="t fa b" dir="rtl" style="left:449.5px;top:534.0px;font-size:19px;color:#000;-webkit-text-stroke:0.4px currentColor;transform:scaleX(0.732);">۷</span>
<span class="t fa b" dir="rtl" style="left:449.5px;top:571.3px;font-size:19px;color:#000;-webkit-text-stroke:0.4px currentColor;transform:scaleX(0.732);">۵</span>
<span class="t fa b" dir="rtl" style="left:449.5px;top:608.6px;font-size:19px;color:#000;-webkit-text-stroke:0.4px currentColor;transform:scaleX(0.732);">۶</span>
<span class="t fa b hv" dir="rtl" style="left:522.7px;top:387.2px;font-size:17px;color:#000;transform:scaleX(0.452);">پزشک۲</span>
<span class="t fa b hv" dir="rtl" style="left:522.7px;top:424.5px;font-size:17px;color:#000;transform:scaleX(0.452);">پزشک۳</span>
<span class="t fa b hv" dir="rtl" style="left:522.7px;top:461.8px;font-size:17px;color:#000;transform:scaleX(0.452);">پزشک۴</span>
<span class="t fa b hv" dir="rtl" style="left:522.7px;top:499.1px;font-size:17px;color:#000;transform:scaleX(0.452);">پزشک۵</span>
<span class="t fa b hv" dir="rtl" style="left:522.7px;top:536.5px;font-size:17px;color:#000;transform:scaleX(0.452);">پزشک۶</span>
<span class="t fa b hv" dir="rtl" style="left:522.7px;top:573.8px;font-size:17px;color:#000;transform:scaleX(0.452);">پزشک۷</span>
<span class="t fa b hv" dir="rtl" style="left:522.7px;top:611.1px;font-size:17px;color:#000;transform:scaleX(0.452);">پزشک۸</span>
<span class="t fa b hv" dir="rtl" style="left:1075.0px;top:386.7px;font-size:17px;color:#000;transform:scaleX(0.520);">پزشک۱</span>
<span class="t fa b hv" dir="rtl" style="left:932.5px;top:461.3px;font-size:17px;color:#000;transform:scaleX(0.569);">پزشک۳</span>
<span class="t fa b hv" dir="rtl" style="left:934.0px;top:536.0px;font-size:17px;color:#000;transform:scaleX(0.520);">پزشک۱</span>
<span class="t fa b hv" dir="rtl" style="left:1073.5px;top:648.0px;font-size:17px;color:#000;transform:scaleX(0.569);">پزشک۳</span>
<span class="t fa b hv" dir="rtl" style="left:933.0px;top:722.6px;font-size:17px;color:#000;transform:scaleX(0.553);">پزشک۲</span>
<span class="t fa b hv" dir="rtl" style="left:791.5px;top:760.0px;font-size:17px;color:#000;transform:scaleX(0.578);">پزشک3</span>
</div>
<div id="dlg"></div>
<div class="btn" style="left:625px;top:576px;width:56px;height:30px"></div>
<div class="btn" style="left:688px;top:576px;width:55px;height:30px;background:#185c37;border:1px solid #3c3c3c;box-shadow:inset 0 0 0 1px rgba(255,255,255,.55)"></div>
<div class="btn" style="left:750px;top:576px;width:55px;height:30px"></div>
<svg class="ov" width="1326" height="885" viewBox="0 0 1326 885"><path d="M802.8 402L810.6 413.2M810.6 402L802.8 413.2" stroke="#444" stroke-width="1.1"/>
<path d="M540.6 484.6L552.2 518H529.2Z" fill="#f8cd84" stroke="#df9a3f" stroke-width="1.1" stroke-linejoin="round"/><path d="M540.7 495v13.4" stroke="#3a3a3a" stroke-width="1.4"/><rect x="540" y="511" width="1.5" height="2.2" fill="#3a3a3a"/></svg>
<div class="tl">
<span class="t" style="left:763.8px;top:399.3px;font-size:17px;color:#555;-webkit-text-stroke:0;transform:scaleX(0.570);">?</span>
<span class="t fa" dir="rtl" style="left:530.3px;top:428.5px;font-size:24px;color:#217346;-webkit-text-stroke:0;transform:scaleX(0.594);">ثبت تکراری</span>
<span class="t fa" dir="ltr" style="left:562.8px;top:484.0px;font-size:13px;color:#3a3a3a;-webkit-text-stroke:0;transform:scaleX(0.778);">شیفت این پزشک تمام شده است.</span>
<span class="t" style="left:562.3px;top:524.3px;font-size:14px;color:#333;transform:scaleX(0.703);">Continue?</span>
<span class="t" style="left:645.0px;top:584.0px;font-size:14px;color:#222;transform:scaleX(0.669);"><u>Y</u>es</span>
<span class="t" style="left:707.7px;top:584.0px;font-size:14px;color:#fff;transform:scaleX(0.742);"><u>N</u>o</span>
<span class="t" style="left:761.5px;top:584.0px;font-size:14px;color:#222;transform:scaleX(0.695);"><u>C</u>ancel</span>
</div>
</body></html>
